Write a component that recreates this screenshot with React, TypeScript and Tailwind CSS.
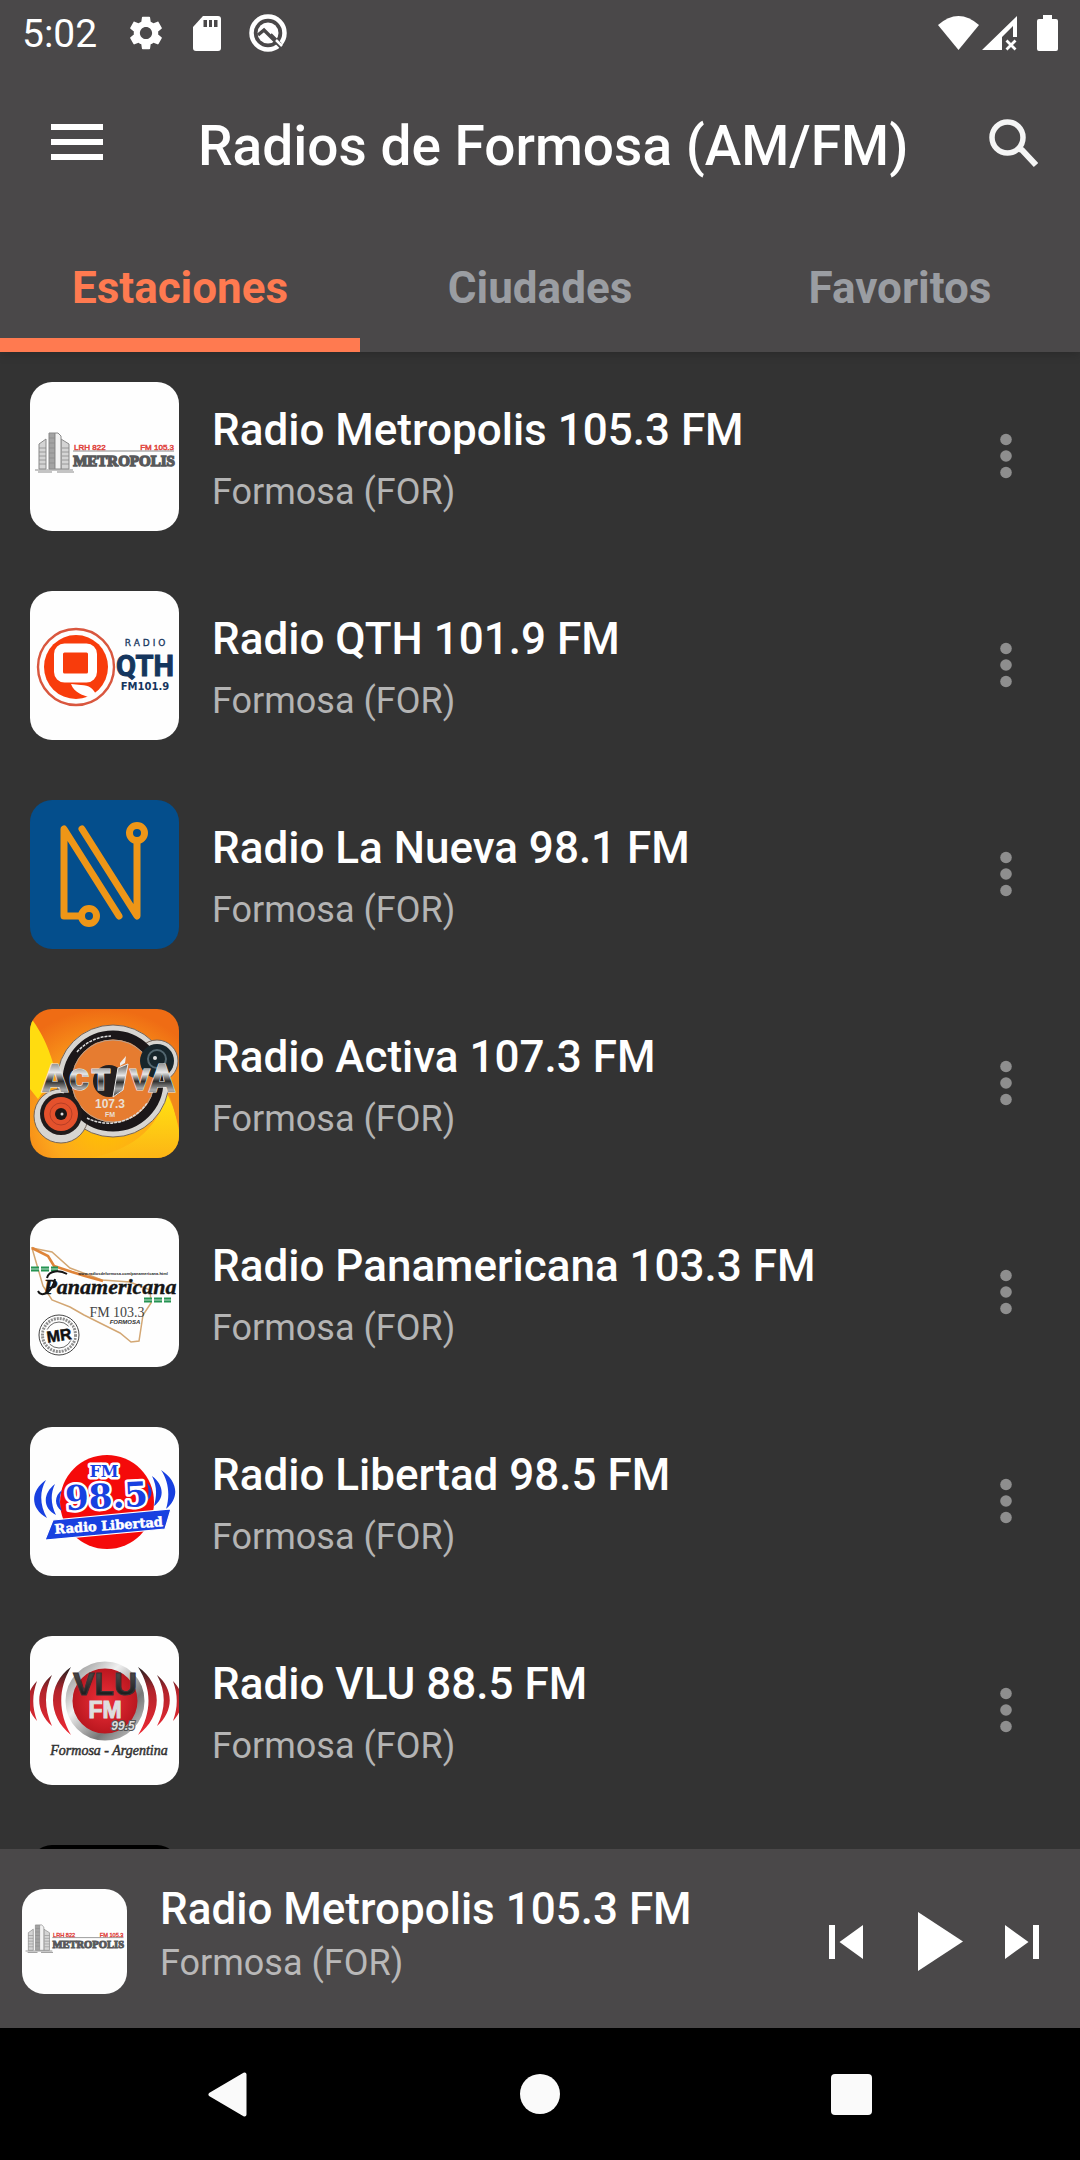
import React from "react";

const OUTLINE = "[paint-order:stroke]";

function MetropolisLogo() {
  return (
    <svg viewBox="0 0 149 149" className="block size-full" aria-hidden="true">
      <rect width="149" height="149" fill="#fefefe" />
      <g stroke="#8a8a8a" strokeWidth="1">
        <path d="M9 62l7-5v30H9zM31 57l8 5v25h-8z" fill="#d4d4d4" />
        <path d="M19 51h6v36h-6z" fill="#a3a3a3" />
        <path d="M25 51h3l3 3v33h-6z" fill="#f2f2f2" />
        <path d="M9 66h7M9 70h7M9 74h7M9 78h7M9 82h7M32 66h7M32 70h7M32 74h7M32 78h7M32 82h7M19 56h6M19 61h6M19 66h6M19 71h6M19 76h6M19 81h6" strokeWidth="0.8" />
        <path d="M5 88h38M8 90h14M27 90h17" strokeWidth="1.2" />
        <path d="M43 69h101" strokeWidth="1.2" />
      </g>
      <g fontFamily="Liberation Sans, sans-serif" fontSize="8" fill="#e0453f" stroke="#e0453f" strokeWidth="0.5">
        <text x="44" y="68">LRH 822</text>
        <text x="144" y="68" textAnchor="end">FM 105.3</text>
      </g>
      <text x="94" y="84" textAnchor="middle" fontFamily="Liberation Serif, serif" fontWeight="700" fontSize="15" fill="#58595b" stroke="#58595b" strokeWidth="1.4">METROPOLIS</text>
    </svg>
  );
}

function QthLogo() {
  return (
    <svg viewBox="0 0 149 149" className="block size-full" aria-hidden="true">
      <rect width="149" height="149" fill="#fefefe" />
      <circle cx="46" cy="76" r="38" fill="none" stroke="#d9573f" strokeWidth="2.4" />
      <circle cx="46" cy="76" r="32" fill="#f83c0c" />
      <rect x="28.500" y="57" width="34" height="30" rx="6" fill="#f83c0c" stroke="#fff" strokeWidth="9" />
      <path d="M41 93c4 0 6 1 10 1 8 0 13 4 15 10l-5 3c-8-3-17-5-20-14z" fill="#fff" />
      <g fill="#15365e" textAnchor="middle">
        <text x="115" y="55" fontFamily="DejaVu Sans, sans-serif" fontSize="9" stroke="#15365e" strokeWidth="0.3">R A D I O</text>
        <text x="115" y="85" fontFamily="Liberation Sans Narrow, Roboto, sans-serif" fontWeight="700" fontSize="29" stroke="#15365e" strokeWidth="1">QTH</text>
        <text x="115" y="99" fontFamily="DejaVu Sans, sans-serif" fontWeight="700" fontSize="10">FM101.9</text>
      </g>
    </svg>
  );
}

function NuevaLogo() {
  return (
    <svg viewBox="0 0 149 149" className="block size-full" aria-hidden="true">
      <rect width="149" height="149" fill="#044e8c" />
      <g fill="none" stroke="#ee9617" strokeWidth="7" strokeLinecap="round" strokeLinejoin="round">
        <path d="M89 116L34 29v87h15" />
        <path d="M52 29l55 87V43" />
        <circle cx="59" cy="116" r="7.500" />
        <circle cx="107" cy="33" r="7.500" />
      </g>
    </svg>
  );
}

function ActivaLogo() {
  return (
    <svg viewBox="0 0 149 149" className="block size-full" aria-hidden="true">
      <defs>
        <radialGradient id="activa-bg" cx="50%" cy="75%" r="75%">
          <stop offset="0" stopColor="#ffc400" />
          <stop offset="0.5" stopColor="#fda81c" />
          <stop offset="1" stopColor="#ef6c14" />
        </radialGradient>
        <linearGradient id="activa-glow" x1="0" y1="0" x2="0" y2="1">
          <stop offset="0" stopColor="#ffe312" />
          <stop offset="1" stopColor="#fdb515" />
        </linearGradient>
        <linearGradient id="activa-chrome" x1="0" y1="0" x2="0" y2="1">
          <stop offset="0" stopColor="#555" />
          <stop offset="0.35" stopColor="#e8e8e8" />
          <stop offset="0.55" stopColor="#2c2c2c" />
          <stop offset="0.75" stopColor="#aaa" />
          <stop offset="1" stopColor="#333" />
        </linearGradient>
      </defs>
      <rect width="149" height="149" fill="url(#activa-bg)" />
      <path d="M0 8c16 20 22 42 26 56L8 90 0 80z" fill="#ffdc10" />
      <path d="M137 85c6 10 9 22 12 36v28H60c40-8 66-26 77-64z" fill="url(#activa-glow)" />
      <path d="M137 80l12-20v58c-4-14-7-26-12-38z" fill="#f08a1a" />
      <g fill="#d7d5d1" stroke="#76665a" strokeWidth="1">
        <circle cx="83" cy="72" r="56" />
        <circle cx="127" cy="52" r="21" />
        <circle cx="31" cy="107" r="27" />
      </g>
      <circle cx="83" cy="72" r="46" fill="#e67c30" stroke="#1b1719" strokeWidth="9" />
      <circle cx="83" cy="72" r="41" fill="none" stroke="#b9a18e" strokeWidth="1" />
      <path d="M47 43a47 47 0 0 1 34-16M57 109a47 47 0 0 0 60-15" fill="none" stroke="#ddd" strokeWidth="1.500" strokeDasharray="3 1" />
      <circle cx="79" cy="72" r="16" fill="#242021" />
      <circle cx="127" cy="52" r="17" fill="#17252b" />
      <circle cx="127" cy="50" r="9" fill="none" stroke="#52666f" strokeWidth="2" />
      <circle cx="125" cy="49" r="2" fill="#ddd" />
      <circle cx="31" cy="105" r="21" fill="#211b1b" />
      <circle cx="31" cy="105" r="17" fill="#e4512c" />
      <circle cx="31" cy="105" r="11" fill="none" stroke="#b73e25" strokeWidth="1" />
      <circle cx="31" cy="105" r="6" fill="#1a1616" />
      <circle cx="32" cy="105" r="1.500" fill="#ddd" />
      <g fontFamily="Roboto, sans-serif" fontWeight="900" fill="url(#activa-chrome)" stroke="#e9e9e9" strokeWidth="1.200" className={OUTLINE} textAnchor="middle">
        <text x="25" y="83" fontSize="38">A</text>
        <text x="49" y="81" fontSize="30">C</text>
        <text x="71" y="81" fontSize="30">T</text>
        <text x="110" y="81" fontSize="30">V</text>
        <text x="132" y="83" fontSize="38">A</text>
      </g>
      <path d="M88 59l10-4-5 26-10 7z" fill="url(#activa-chrome)" stroke="#e9e9e9" />
      <path d="M90 54l6-7-1 7-5 3z" fill="#eee" />
      <g fontFamily="Liberation Sans, sans-serif" fontWeight="700" fill="#eadfd3" textAnchor="middle">
        <text x="80" y="99" fontSize="12">107.3</text>
        <text x="80" y="108" fontSize="7">FM</text>
      </g>
    </svg>
  );
}

function PanamericanaLogo() {
  return (
    <svg viewBox="0 0 149 149" className="block size-full" aria-hidden="true">
      <rect width="149" height="149" fill="#fefefe" />
      <path d="M2 30l11 38 9 14 18 7 14 8 20 10 16 8 11 9 8-1 4-26 8-12-1-13-20-8-28-2-32-12-18-16z" fill="none" stroke="#d3a774" strokeWidth="1.500" />
      <path d="M2 30l16 8 6 10 18 6 13 4 18 5" fill="none" stroke="#df8438" strokeWidth="2.600" />
      <g stroke="#259352" strokeWidth="5" strokeDasharray="8 2">
        <path d="M1 51h27M114 82h27" />
      </g>
      <path d="M1 51h27M114 82h27" stroke="#fff" strokeWidth="0.7" />
      <text x="93" y="57" textAnchor="middle" fontFamily="Liberation Sans, sans-serif" fontWeight="700" fontSize="4" fill="#222">www.radiosdeformosa.com/panamericana.html</text>
      <text x="80" y="76" textAnchor="middle" fontFamily="Liberation Serif, serif" fontStyle="italic" fontWeight="700" fontSize="22" fill="#151515" stroke="#151515" strokeWidth="0.4">Panamericana</text>
      <path d="M17 60c2-8 13-8 20-4M8 73c3 7 14 2 17-12" fill="none" stroke="#151515" strokeWidth="2" />
      <text x="87" y="99" textAnchor="middle" fontFamily="Liberation Serif, serif" fontSize="14" fill="#444">FM 103.3</text>
      <text x="95" y="106" textAnchor="middle" fontFamily="Liberation Sans, sans-serif" fontStyle="italic" fontWeight="700" fontSize="6" fill="#333">FORMOSA</text>
      <g fill="none" stroke="#444">
        <circle cx="29" cy="117" r="20" strokeWidth="1" />
        <circle cx="29" cy="117" r="16.500" strokeWidth="3" strokeDasharray="2 1" opacity="0.6" />
        <circle cx="29" cy="117" r="13" strokeWidth="0.8" />
      </g>
      <g transform="rotate(-8 29 117)">
        <rect x="15" y="110" width="28" height="14" fill="#fefefe" />
        <text x="29" y="123" textAnchor="middle" fontFamily="Liberation Sans, sans-serif" fontWeight="700" fontSize="16" fill="#111" stroke="#111" strokeWidth="0.5">MR</text>
      </g>
    </svg>
  );
}

function LibertadLogo() {
  return (
    <svg viewBox="0 0 149 149" className="block size-full" aria-hidden="true">
      <rect width="149" height="149" fill="#fefefe" />
      <circle cx="77" cy="75" r="47" fill="#f50a0a" />
      <g fill="#1840e0">
        <path d="M16 53c-15 10-17 28 1 38-7-12-8-26-1-38zM25 57c-12 9-13 24 1 31-5-10-6-21-1-31zM32 63c-8 6-8 16 0 21-3-7-3-14 0-21z" />
        <path d="M131 43c17 11 19 28 5 39 4-13 3-27-5-39zM122 49c12 9 13 22 2 30 3-11 3-20-2-30zM117 56c6 5 6 13 0 18 2-6 2-12 0-18z" />
        <path d="M23 93l118-11-6 20-120 11z" stroke="#fff" strokeWidth="1.200" />
      </g>
      <g fontFamily="DejaVu Serif, serif" fontWeight="700" textAnchor="middle" fill="#1840e0" strokeLinejoin="round">
        <g stroke="#fff" strokeWidth="5" className={OUTLINE}>
          <text x="74" y="50" fontSize="16">FM</text>
          <text x="77" y="81" fontSize="34" transform="rotate(-3 77 81)">98.5</text>
        </g>
      </g>
      <text x="79" y="103" textAnchor="middle" fontFamily="DejaVu Serif, serif" fontWeight="700" fontSize="13" fill="#fff" stroke="#fff" strokeWidth="0.5" transform="rotate(-4 79 103)">Radio Libertad</text>
    </svg>
  );
}

function VluLogo() {
  return (
    <svg viewBox="0 0 149 149" className="block size-full" aria-hidden="true">
      <defs>
        <linearGradient id="vlu-ring" x1="0" y1="0" x2="1" y2="1">
          <stop offset="0" stopColor="#8a8a8a" />
          <stop offset="0.35" stopColor="#f0f0f0" />
          <stop offset="0.7" stopColor="#777" />
          <stop offset="1" stopColor="#ccc" />
        </linearGradient>
        <radialGradient id="vlu-disc">
          <stop offset="0" stopColor="#f0303a" />
          <stop offset="1" stopColor="#b4141c" />
        </radialGradient>
        <linearGradient id="vlu-text" x1="0" y1="0" x2="0" y2="1">
          <stop offset="0.3" stopColor="#444" />
          <stop offset="1" stopColor="#0c0c0c" />
        </linearGradient>
        <linearGradient id="vlu-wave" x1="0" y1="0" x2="0" y2="1">
          <stop offset="0" stopColor="#222" />
          <stop offset="0.35" stopColor="#b3232b" />
          <stop offset="1" stopColor="#ee2933" />
        </linearGradient>
      </defs>
      <rect width="149" height="149" fill="#fefefe" />
      <g fill="url(#vlu-wave)">
        <path d="M41 31c-24 17-24 49 0 68-13-23-13-46 0-68zM22 39c-17 14-17 36 0 51-8-18-8-34 0-51zM7 45c-12 12-12 27 0 40-5-14-5-26 0-40z" />
        <path d="M108 31c25 17 25 49 0 68 14-23 14-46 0-68zM127 39c17 14 17 36 0 51 9-18 9-34 0-51zM143 45c12 12 12 27 0 40 5-14 5-26 0-40z" />
      </g>
      <circle cx="75" cy="65" r="36" fill="url(#vlu-disc)" stroke="url(#vlu-ring)" strokeWidth="7" />
      <g fontFamily="Liberation Sans, sans-serif" fontWeight="700" textAnchor="middle">
        <text x="75" y="59" fontSize="32" fill="url(#vlu-text)" stroke="#3a3335" strokeWidth="1">VLU</text>
        <text x="75" y="82" fontSize="23" fill="#dedede" stroke="#dedede" strokeWidth="1">FM</text>
        <text x="93" y="94" fontSize="12" fontStyle="italic" fill="#ddd" stroke="#555" strokeWidth="2" className={OUTLINE}>99.5</text>
      </g>
      <text x="79" y="119" textAnchor="middle" fontFamily="Liberation Serif, serif" fontStyle="italic" fontSize="14" fill="#333" stroke="#333" strokeWidth="0.5">Formosa - Argentina</text>
    </svg>
  );
}

function BlackLogo() {
  return <div className="size-full bg-black" />;
}

const stations = [
  { name: "Radio Metropolis 105.3 FM", Logo: MetropolisLogo },
  { name: "Radio QTH 101.9 FM", Logo: QthLogo },
  { name: "Radio La Nueva 98.1 FM", Logo: NuevaLogo },
  { name: "Radio Activa 107.3 FM", Logo: ActivaLogo },
  { name: "Radio Panamericana 103.3 FM", Logo: PanamericanaLogo },
  { name: "Radio Libertad 98.5 FM", Logo: LibertadLogo },
  { name: "Radio VLU 88.5 FM", Logo: VluLogo },
  { name: "", Logo: BlackLogo },
];

function StatusBar() {
  return (
    <div className="flex h-[66px] shrink-0 items-center justify-between pr-[22px] pl-[22px] text-white">
      <div className="flex items-center">
        <span className="w-[107px] pt-[2px] text-[39px] leading-[44px]">5:02</span>
        <svg viewBox="2 2 20 20" className="h-9 w-[34px]" fill="currentColor" aria-label="Ajustes">
          <path d="M19.140 12.940c.04-.3.060-.61.060-.94 0-.32-.02-.64-.07-.94l2.030-1.580c.18-.14.23-.41.120-.61l-1.920-3.320c-.12-.22-.37-.29-.59-.22l-2.390.96c-.5-.38-1.030-.7-1.620-.94l-.36-2.540c-.04-.24-.24-.41-.48-.41h-3.840c-.24 0-.43.17-.47.41l-.36 2.540c-.59.24-1.130.57-1.620.94l-2.390-.96c-.22-.08-.47 0-.59.22L2.740 8.870c-.12.21-.08.47.120.61l2.030 1.580c-.05.3-.09.63-.09.94s.02.64.070.94l-2.030 1.580c-.18.14-.23.41-.12.61l1.920 3.320c.12.22.37.29.59.22l2.390-.96c.5.38 1.030.7 1.620.94l.36 2.540c.05.24.24.41.48.41h3.840c.24 0 .44-.17.470-.41l.36-2.540c.59-.24 1.130-.56 1.620-.94l2.390.96c.22.08.47 0 .59-.22l1.920-3.320c.12-.22.070-.47-.12-.61l-2.010-1.580zM12 15.600c-1.980 0-3.600-1.620-3.600-3.600s1.620-3.600 3.600-3.600 3.600 1.620 3.600 3.600-1.620 3.600-3.600 3.600z" />
        </svg>
        <svg viewBox="0 0 28 35" className="ml-[30px] h-[35px] w-7" aria-label="Tarjeta SD">
          <path d="M10 0h15a3 3 0 0 1 3 3v29a3 3 0 0 1-3 3H3a3 3 0 0 1-3-3V11z" fill="currentColor" />
          <path d="M10.500 4h3.500v7h-3.500zM16 4h3v7h-3zM21 4h3.500v7H21z" fill="#4a4849" />
        </svg>
        <svg viewBox="0 0 38 38" className="ml-7 size-[38px]" fill="none" aria-label="Notificación">
          <circle cx="19" cy="19" r="16.500" stroke="currentColor" strokeWidth="4.500" />
          <circle cx="19" cy="19" r="10.500" fill="currentColor" />
          <path d="M9 21l6-5 19 19" stroke="#4a4849" strokeWidth="3.500" />
          <path d="M22 20l10 10" stroke="#4a4849" strokeWidth="2" />
          <path d="M27 26l6 6" stroke="currentColor" strokeWidth="2.500" />
        </svg>
      </div>
      <div className="flex items-center">
        <svg viewBox="0 0 41 34" className="h-[34px] w-[41px]" aria-label="Wi-Fi">
          <path d="M0 9Q20.500-9 41 9L20.500 34z" fill="currentColor" />
        </svg>
        <svg viewBox="0 0 35 35" className="ml-[3px] size-[35px]" fill="none" stroke="currentColor" aria-label="Sin señal">
          <path d="M0 34L35 0v21h-4V10L20 21v13z" fill="currentColor" stroke="none" />
          <path d="M24.500 24.500l9 9M33.500 24.500l-9 9" strokeWidth="2.800" />
        </svg>
        <svg viewBox="0 0 21 36" className="ml-5 h-9 w-[21px]" aria-label="Batería">
          <path d="M6 0h9v4h4a2 2 0 0 1 2 2v28a2 2 0 0 1-2 2H2a2 2 0 0 1-2-2V6a2 2 0 0 1 2-2h4z" fill="currentColor" />
        </svg>
      </div>
    </div>
  );
}

const tabs = ["Estaciones", "Ciudades", "Favoritos"];

export default function App() {
  const [active, setActive] = React.useState(0);
  return (
    <div className="flex h-screen flex-col overflow-hidden bg-[#333333] font-[Roboto,sans-serif]">
      <header className="relative shrink-0 bg-[#4a4849] shadow-[0_2px_10px_rgba(0,0,0,0.2)]">
        <StatusBar />
        <div className="flex h-[154px] items-center pr-[42px] pl-[51px] text-white">
          <button type="button" aria-label="Menú" className="flex w-[147px] flex-col gap-[9px] pb-[3px]">
            <span className="h-[6px] w-[52px] bg-white" />
            <span className="h-[6px] w-[52px] bg-white" />
            <span className="h-[6px] w-[52px] bg-white" />
          </button>
          <h1 className="flex-1 pt-[6px] text-[55px] leading-[64px] font-medium whitespace-nowrap">Radios de Formosa (AM/FM)</h1>
          <button type="button" aria-label="Buscar">
            <svg viewBox="0 0 49 49" className="size-[49px]" fill="none" stroke="#f5f5f5">
              <circle cx="18.500" cy="18.500" r="15.500" strokeWidth="5.500" />
              <path d="M30 30l3 1 14 15" strokeWidth="6" />
            </svg>
          </button>
        </div>
        <div role="tablist" className="grid h-[132px] grid-cols-3">
          {tabs.map((label, i) => (
            <button
              key={label}
              type="button"
              role="tab"
              aria-selected={i === active}
              onClick={() => setActive(i)}
              className={
                i === active
                  ? "border-b-14 border-[#ff7a50] pt-[18px] text-[44px] leading-[52px] font-bold text-[#ff7a50]"
                  : "border-b-14 border-transparent pt-[18px] text-[44px] leading-[52px] font-bold text-[#9a9da2]"
              }
            >
              {label}
            </button>
          ))}
        </div>
      </header>

      <main className="min-h-0 flex-1 overflow-hidden">
        <ul>
          {stations.map(({ name, Logo }, i) => (
            <li key={i} className="flex h-[209px] items-start pr-[60px] pl-[30px]">
              <div className="mt-[30px] size-[149px] shrink-0 overflow-hidden rounded-[22px]">
                <Logo />
              </div>
              {name && (
                <>
                  <div className="mt-[52px] ml-[33px] flex-1">
                    <div className="text-[44px] leading-[52px] font-medium text-white">{name}</div>
                    <div className="mt-[14px] text-[36px] leading-[44px] text-[#b4b4b4]">Formosa (FOR)</div>
                  </div>
                  <button type="button" aria-label={"Opciones de " + name} className="mt-[76px] px-2">
                    <svg viewBox="0 0 12 56" className="h-14 w-3" fill="#8e8e8e">
                      <circle cx="6" cy="11.500" r="5.800" />
                      <circle cx="6" cy="28" r="5.800" />
                      <circle cx="6" cy="44.500" r="5.800" />
                    </svg>
                  </button>
                </>
              )}
            </li>
          ))}
        </ul>
      </main>

      <section aria-label="Reproductor" className="flex h-[179px] shrink-0 items-center bg-[#4a4849] pr-[41px] pl-[22px] text-white">
        <div className="mt-[6px] size-[105px] shrink-0 overflow-hidden rounded-[22px]">
          <MetropolisLogo />
        </div>
        <div className="ml-[33px] flex-1 pb-[10px]">
          <div className="text-[44px] leading-[52px] font-medium">Radio Metropolis 105.3 FM</div>
          <div className="mt-[6px] text-[36px] leading-[44px] text-[#b9b8b8]">Formosa (FOR)</div>
        </div>
        <div className="flex items-center pt-[6px]">
          <button type="button" aria-label="Anterior">
            <svg viewBox="0 0 34 34" className="size-[34px]" fill="currentColor">
              <path d="M0 0h6v34H0zM34 0v34L10.500 17z" />
            </svg>
          </button>
          <button type="button" aria-label="Reproducir" className="ml-[55px]">
            <svg viewBox="0 0 45 59" className="h-[59px] w-[45px]" fill="currentColor">
              <path d="M0 0l45 29.500L0 59z" />
            </svg>
          </button>
          <button type="button" aria-label="Siguiente" className="ml-[42px]">
            <svg viewBox="0 0 34 34" className="size-[34px]" fill="currentColor">
              <path d="M28 0h6v34h-6zM0 0v34l23.500-17z" />
            </svg>
          </button>
        </div>
      </section>

      <nav aria-label="Sistema" className="flex h-[132px] shrink-0 items-center justify-between bg-black px-[208px]">
        <button type="button" aria-label="Atrás" className="w-[41px]">
          <svg viewBox="0 0 39 45" className="h-[45px] w-[39px]" fill="#fafafa" stroke="#fafafa" strokeWidth="4" strokeLinejoin="round">
            <path d="M2.500 22.500L36.500 2.500v40z" />
          </svg>
        </button>
        <button type="button" aria-label="Inicio" className="size-10 rounded-full bg-[#fafafa]" />
        <button type="button" aria-label="Recientes" className="size-[41px] rounded-[4px] bg-[#fafafa]" />
      </nav>
    </div>
  );
}
